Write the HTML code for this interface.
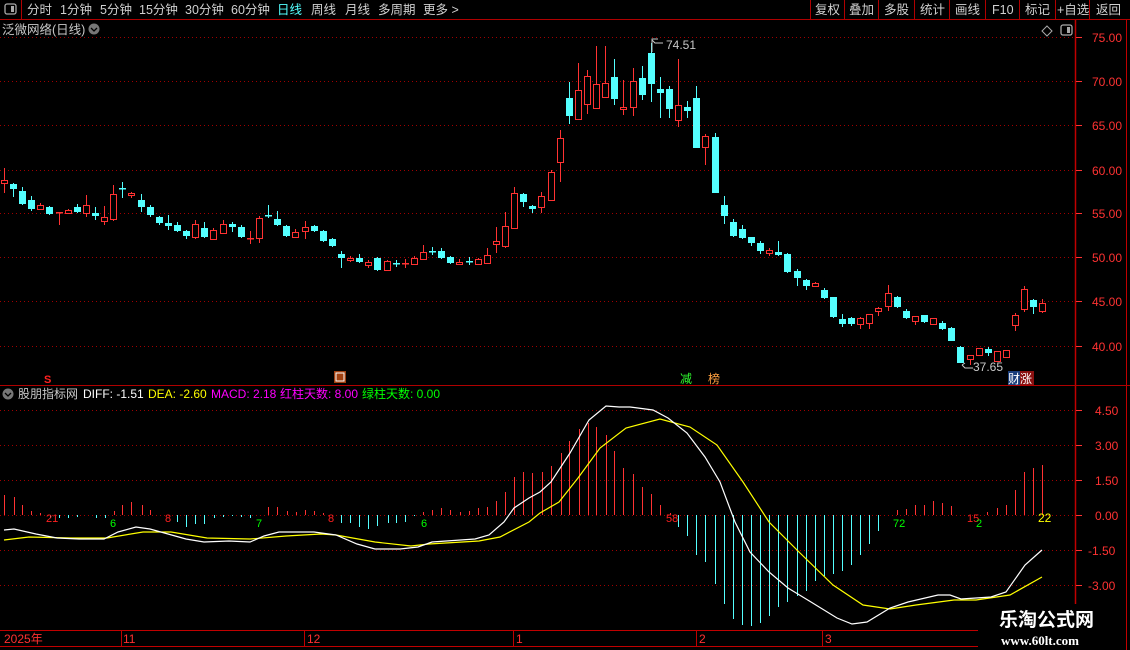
<!DOCTYPE html>
<html><head><meta charset="utf-8">
<style>
html,body{margin:0;padding:0;background:#000;width:1130px;height:650px;overflow:hidden;font-family:"Liberation Sans","Noto Sans CJK SC",sans-serif;}
svg{position:absolute;left:0;top:0}
</style></head><body>
<svg id="s" width="1130" height="650" xmlns="http://www.w3.org/2000/svg" font-family="Liberation Sans, Noto Sans CJK SC, sans-serif">
<rect width="1130" height="650" fill="#000"/>
<!-- top bar -->
<line x1="0" y1="19.5" x2="1130" y2="19.5" stroke="#b00000"/>
<line x1="21.5" y1="0" x2="21.5" y2="19" stroke="#b00000"/>
<rect x="5" y="4" width="11" height="10" rx="2" fill="none" stroke="#aaa" stroke-width="1.3"/>
<rect x="11" y="6" width="3" height="6" fill="#aaa"/>
<g font-size="12.5" fill="#d0d0d0">
<text x="27" y="14">分时</text><text x="60" y="14">1分钟</text><text x="100" y="14">5分钟</text>
<text x="139" y="14">15分钟</text><text x="185" y="14">30分钟</text><text x="231" y="14">60分钟</text>
<text x="277" y="14" fill="#54ffff">日线</text><text x="311" y="14">周线</text><text x="345" y="14">月线</text>
<text x="378" y="14">多周期</text><text x="423" y="14">更多 &gt;</text>
</g>
<g stroke="#b00000"><line x1="810.5" y1="0" x2="810.5" y2="19"/><line x1="844.5" y1="0" x2="844.5" y2="19"/><line x1="878.5" y1="0" x2="878.5" y2="19"/><line x1="914.5" y1="0" x2="914.5" y2="19"/><line x1="949.5" y1="0" x2="949.5" y2="19"/><line x1="985.5" y1="0" x2="985.5" y2="19"/><line x1="1019.5" y1="0" x2="1019.5" y2="19"/><line x1="1055.5" y1="0" x2="1055.5" y2="19"/><line x1="1089.5" y1="0" x2="1089.5" y2="19"/></g>
<g font-size="12.5" fill="#d0d0d0">
<text x="815" y="14">复权</text><text x="849" y="14">叠加</text><text x="884" y="14">多股</text><text x="920" y="14">统计</text>
<text x="955" y="14">画线</text><text x="992" y="14">F10</text><text x="1025" y="14">标记</text><text x="1057" y="14">+自选</text><text x="1096" y="14">返回</text>
</g>
<text x="2" y="34" font-size="12.5" fill="#c8c8c8">泛微网络(日线)</text>
<circle cx="94" cy="29" r="5.5" fill="#777"/><path d="M91 28l3 3 3-3" stroke="#000" stroke-width="1.3" fill="none"/>
<path d="M1047 26l5 5-5 5-5-5z" fill="none" stroke="#aaa"/>
<rect x="1061" y="25" width="11" height="10" rx="2" fill="none" stroke="#aaa" stroke-width="1.3"/><rect x="1067" y="27" width="3" height="6" fill="#aaa"/>
<!-- axes -->
<line x1="1075.5" y1="20" x2="1075.5" y2="630" stroke="#c00000" stroke-width="1.5"/>
<line x1="1126.5" y1="20" x2="1126.5" y2="650" stroke="#c00000"/>
<line x1="0" y1="385.5" x2="1130" y2="385.5" stroke="#b00000"/>
<g id="grid" stroke="#a00000" stroke-dasharray="1,3"></g>
<g id="ax" font-size="12" fill="#ff3232"></g>
<g id="candles"></g>
<g id="macd"></g>
<!-- labels main -->
<text x="666" y="49" font-size="12" fill="#c8c8c8">74.51</text>
<path d="M652 52v-13h6M652 40l3 3h8" stroke="#c8c8c8" fill="none"/>
<text x="973" y="371" font-size="12" fill="#c8c8c8">37.65</text>
<path d="M962 365l3 3h8M962 365l3-2" stroke="#c8c8c8" fill="none"/>
<text x="44" y="383" font-size="11" fill="#ff2020" font-weight="bold">S</text>
<rect x="334" y="371" width="12" height="12" fill="#a04010"/><rect x="336" y="373" width="8" height="8" fill="none" stroke="#fff"/>
<text x="680" y="383" font-size="12" fill="#30ff30">减</text>
<text x="708" y="383" font-size="12" fill="#ffa040">榜</text>
<rect x="1008" y="371" width="12" height="14" fill="#1a3d7a"/><rect x="1020" y="371" width="14" height="14" fill="#8a1010"/>
<text x="1008" y="383" font-size="12" fill="#fff">财涨</text>
<!-- macd title -->
<circle cx="8" cy="394" r="5.5" fill="#777"/><path d="M5 393l3 3 3-3" stroke="#000" stroke-width="1.3" fill="none"/>
<g font-size="12">
<text x="18" y="398" fill="#c8c8c8">股朋指标网</text>
<text x="83" y="398" fill="#fff">DIFF: -1.51</text>
<text x="148" y="398" fill="#ffff00">DEA: -2.60</text>
<text x="211" y="398" fill="#ff00ff">MACD: 2.18</text>
<text x="280" y="398" fill="#ff00ff">红柱天数: 8.00</text>
<text x="362" y="398" fill="#00ff00">绿柱天数: 0.00</text>
</g>
<g font-size="11">
<text x="46" y="522" fill="#ff2020">21</text><text x="110" y="527" fill="#00ff00">6</text>
<text x="165" y="522" fill="#ff2020">8</text><text x="256" y="527" fill="#00ff00">7</text>
<text x="328" y="522" fill="#ff2020">8</text><text x="421" y="527" fill="#00ff00">6</text>
<text x="666" y="522" fill="#ff2020">58</text><text x="893" y="527" fill="#00ff00">72</text>
<text x="967" y="522" fill="#ff2020">15</text><text x="976" y="527" fill="#00ff00">2</text>
<text x="1038" y="522" fill="#ffff00" font-size="12">22</text>
</g>
<!-- date axis -->
<line x1="0" y1="630.5" x2="1075" y2="630.5" stroke="#c00000"/>
<line x1="0" y1="646.5" x2="1075" y2="646.5" stroke="#c00000"/>
<g stroke="#c00000"><line x1="121.5" y1="630" x2="121.5" y2="646"/><line x1="304.5" y1="630" x2="304.5" y2="646"/><line x1="513.5" y1="630" x2="513.5" y2="646"/><line x1="696.5" y1="630" x2="696.5" y2="646"/><line x1="822.5" y1="630" x2="822.5" y2="646"/></g>
<g font-size="12" fill="#ff3030">
<text x="4" y="643">2025年</text><text x="123" y="643">11</text><text x="307" y="643">12</text><text x="516" y="643">1</text><text x="699" y="643">2</text><text x="825" y="643">3</text>
</g>
<rect x="978" y="604" width="148" height="46" fill="#000"/>
<text x="999" y="626" font-size="19" font-weight="bold" fill="#fff">乐淘公式网</text>
<text x="1001" y="645" font-size="13" font-weight="bold" fill="#fff" font-family="Liberation Serif, serif">www.60lt.com</text>
</svg>
<script>
var NS="http://www.w3.org/2000/svg";
function el(p,t,a){var e=document.createElementNS(NS,t);for(var k in a)e.setAttribute(k,a[k]);p.appendChild(e);return e;}
var g=document.getElementById('grid'),ax=document.getElementById('ax');
var pv=[[75,37],[70,81],[65,125],[60,170],[55,213],[50,257],[45,301],[40,346]];
pv.forEach(function(p){el(g,'line',{x1:0,y1:p[1]+.5,x2:1074,y2:p[1]+.5});el(ax,'line',{x1:1076,y1:p[1]+.5,x2:1082,y2:p[1]+.5,stroke:'#ff3232'});var t=el(ax,'text',{x:1092,y:p[1]+5});t.textContent=p[0].toFixed(2);});
var mv=[["4.50",410],["3.00",445],["1.50",480],["0.00",515],["-1.50",550],["-3.00",585]];
mv.forEach(function(p){el(g,'line',{x1:0,y1:p[1]+.5,x2:1074,y2:p[1]+.5});el(ax,'line',{x1:1076,y1:p[1]+.5,x2:1082,y2:p[1]+.5,stroke:'#ff3232'});var t=el(ax,'text',{x:p[0][0]=='-'?1088:1095,y:p[1]+5});t.textContent=p[0];});
// candles: [x,top,bot,type,wt,wb]
var C=[[4,180,183,'r',168,193],[13,184,189,'c',183,197],[22,191,204,'c',187,205],[31,200,209,'c',196,211],[40,205,209,'r',203,210],[49,207,214,'c',206,215],[59,212,213,'r',212,225],[68,210,213,'r',209,214],[77,207,212,'c',204,213],[86,205,213,'r',195,217],[95,213,216,'c',207,220],[104,217,221,'r',206,225],[113,194,219,'r',185,221],[122,188,189,'c',182,198],[131,193,195,'r',192,198],[141,200,207,'c',194,212],[150,207,215,'c',205,217],[159,217,223,'c',216,225],[168,223,226,'c',215,230],[177,225,231,'c',222,232],[186,231,236,'c',230,239],[195,224,237,'r',220,239],[204,228,237,'c',222,238],[213,230,239,'r',228,240],[223,224,233,'r',220,234],[232,224,227,'c',222,232],[241,227,237,'c',225,238],[250,238,239,'r',231,244],[259,218,238,'r',216,243],[268,215,216,'c',205,218],[277,219,225,'c',211,226],[286,226,236,'c',225,237],[295,232,237,'r',229,238],[305,227,231,'r',221,239],[314,226,231,'c',225,232],[323,231,241,'c',230,242],[332,239,246,'c',238,247],[341,254,258,'c',251,268],[350,258,260,'r',256,262],[359,258,262,'c',254,263],[368,262,265,'r',260,268],[377,258,270,'c',257,271],[387,261,270,'r',260,271],[396,263,264,'c',260,267],[405,263,264,'r',259,268],[414,258,264,'r',256,265],[423,252,259,'r',245,260],[432,251,252,'c',247,255],[441,251,258,'c',248,259],[450,257,263,'c',256,264],[459,262,264,'r',259,265],[469,261,262,'c',257,265],[478,259,264,'r',258,265],[487,255,263,'r',248,264],[496,241,244,'r',227,253],[505,226,246,'r',212,248],[514,193,228,'r',187,229],
[523,194,202,'c',193,207],[532,206,209,'c',205,213],[541,196,207,'r',192,213],[551,172,200,'r',170,201],[560,138,162,'r',130,182],[569,98,116,'c',82,124],[578,90,119,'r',63,120],[587,76,104,'r',70,114],[596,84,108,'r',46,109],[605,83,97,'r',46,98],[614,77,99,'c',59,105],[623,107,109,'r',80,115],[633,81,107,'r',68,116],[642,78,95,'c',66,100],[651,53,84,'c',43,102],[660,89,93,'c',77,118],[669,89,109,'c',86,118],[678,105,120,'r',59,127],[687,107,111,'c',101,118],[696,98,148,'c',86,148],[705,136,147,'r',134,165],[715,137,193,'c',133,193],[724,205,216,'c',196,224],[733,222,236,'c',219,237],[742,229,238,'c',225,239],[751,237,243,'c',237,246],[760,243,251,'c',241,254],[769,250,253,'r',248,256],[778,252,255,'c',241,256],
[787,254,272,'c',253,273],[797,271,278,'c',269,286],[806,280,286,'c',279,290],[815,283,286,'r',282,287],[824,290,298,'c',288,299],[833,297,317,'c',297,318],[842,319,324,'c',314,327],[851,318,324,'c',317,326],[860,318,324,'r',317,329],[869,314,323,'r',314,329],[878,308,311,'r',307,316],[888,293,306,'r',285,311],[897,297,307,'c',296,308],[906,311,318,'c',309,319],[915,316,321,'r',316,325],[924,315,322,'c',315,323],[933,318,324,'r',318,325],[942,323,329,'c',321,330],[951,328,341,'c',327,341],[960,347,363,'c',346,363],[970,355,359,'r',355,365],[979,348,355,'r',348,356],[988,349,353,'c',347,356],[997,351,361,'r',351,362],[1006,350,357,'r',350,358],[1015,315,325,'r',313,331],[1024,289,309,'r',286,312],[1033,300,307,'c',299,314],[1042,303,311,'r',299,313]];
var cg=document.getElementById('candles');
C.forEach(function(c){var x=c[0],col=c[3]=='r'?'#ff3232':'#54ffff';
el(cg,'line',{x1:x+.5,y1:c[4],x2:x+.5,y2:c[5],stroke:col});
var h=Math.max(c[2]-c[1],1);
if(c[3]=='r'){ if(h<=1) el(cg,'rect',{x:x-3,y:c[1],width:7,height:1.5,fill:col}); else el(cg,'rect',{x:x-2.5,y:c[1]+.5,width:6,height:h,fill:'#000',stroke:col});}
else el(cg,'rect',{x:x-3,y:c[1],width:7,height:Math.max(h,1.5),fill:col});});
// macd bars [x,topY]
var B=[[4,495],[14,497],[22,505],[31,511],[40,513],[50,518],[59,518],[68,518],[77,517],[96,518],[105,518],[114,511],[122,505],[131,502],[142,505],[150,510],[177,522],[186,527],[195,524],[204,524],[214,518],[223,517],[232,516],[241,517],[250,518],[268,507],[277,507],[287,511],[296,512],[305,510],[314,511],[323,513],[341,523],[350,523],[359,527],[368,529],[377,526],[388,523],[396,523],[405,522],[414,516],[423,512],[432,510],[441,508],[450,510],[460,512],[469,511],[478,508],[487,507],[496,501],[505,492],[514,477],[523,472],[532,473],[542,472],[551,466],[561,453],[569,441],[579,429],[588,423],[596,427],[606,435],[614,451],[623,468],[633,474],[642,487],[651,494],[660,505],[670,513],[678,527],[687,536],[696,555],[705,562],[715,584],[724,604],[733,619],[742,625],[751,626],[760,623],[769,616],[778,607],[787,602],[797,596],[806,591],[815,581],[824,576],[833,574],[842,571],[851,565],[860,555],[869,544],[878,531],[897,510],[906,509],[915,505],[924,505],[933,501],[942,503],[951,506],[987,512],[997,508],[1006,505],[1015,490],[1024,472],[1033,468],[1042,465]];
var mg=document.getElementById('macd');
B.forEach(function(b){var up=b[1]<515;el(mg,'line',{x1:b[0]+.5,y1:515,x2:b[0]+.5,y2:b[1],stroke:up?'#ff3232':'#54ffff'});});
var W=[[4,530],[14,529],[36,534],[57,538],[79,539],[104,539],[118,532],[136,527],[150,529],[168,534],[186,539],[204,542],[229,541],[250,542],[264,536],[279,532],[314,532],[336,535],[357,544],[375,549],[400,549],[418,547],[432,542],[475,539],[489,535],[504,522],[514,508],[529,498],[540,492],[551,482],[570,453],[589,420],[606,406],[619,407],[630,407],[653,410],[668,418],[687,433],[705,457],[720,482],[735,522],[750,552],[769,572],[788,588],[811,602],[837,618],[852,624],[867,622],[890,608],[908,602],[938,595],[950,595],[961,599],[991,597],[1006,592],[1025,565],[1042,550]];
var Y=[[4,540],[29,537],[71,538],[107,538],[143,532],[171,532],[207,538],[250,539],[286,536],[321,534],[336,535],[375,542],[411,546],[429,544],[479,541],[500,537],[529,522],[540,513],[559,502],[578,478],[600,448],[626,428],[660,419],[690,427],[717,445],[743,482],[769,522],[799,552],[833,585],[863,605],[890,609],[916,605],[954,600],[976,600],[1010,595],[1042,577]];
function pl(p,c){el(mg,'polyline',{points:p.map(function(a){return a.join(',')}).join(' '),fill:'none',stroke:c,'stroke-width':1.2});}
pl(Y,'#ffff00');pl(W,'#ffffff');
</script>
</body></html>
